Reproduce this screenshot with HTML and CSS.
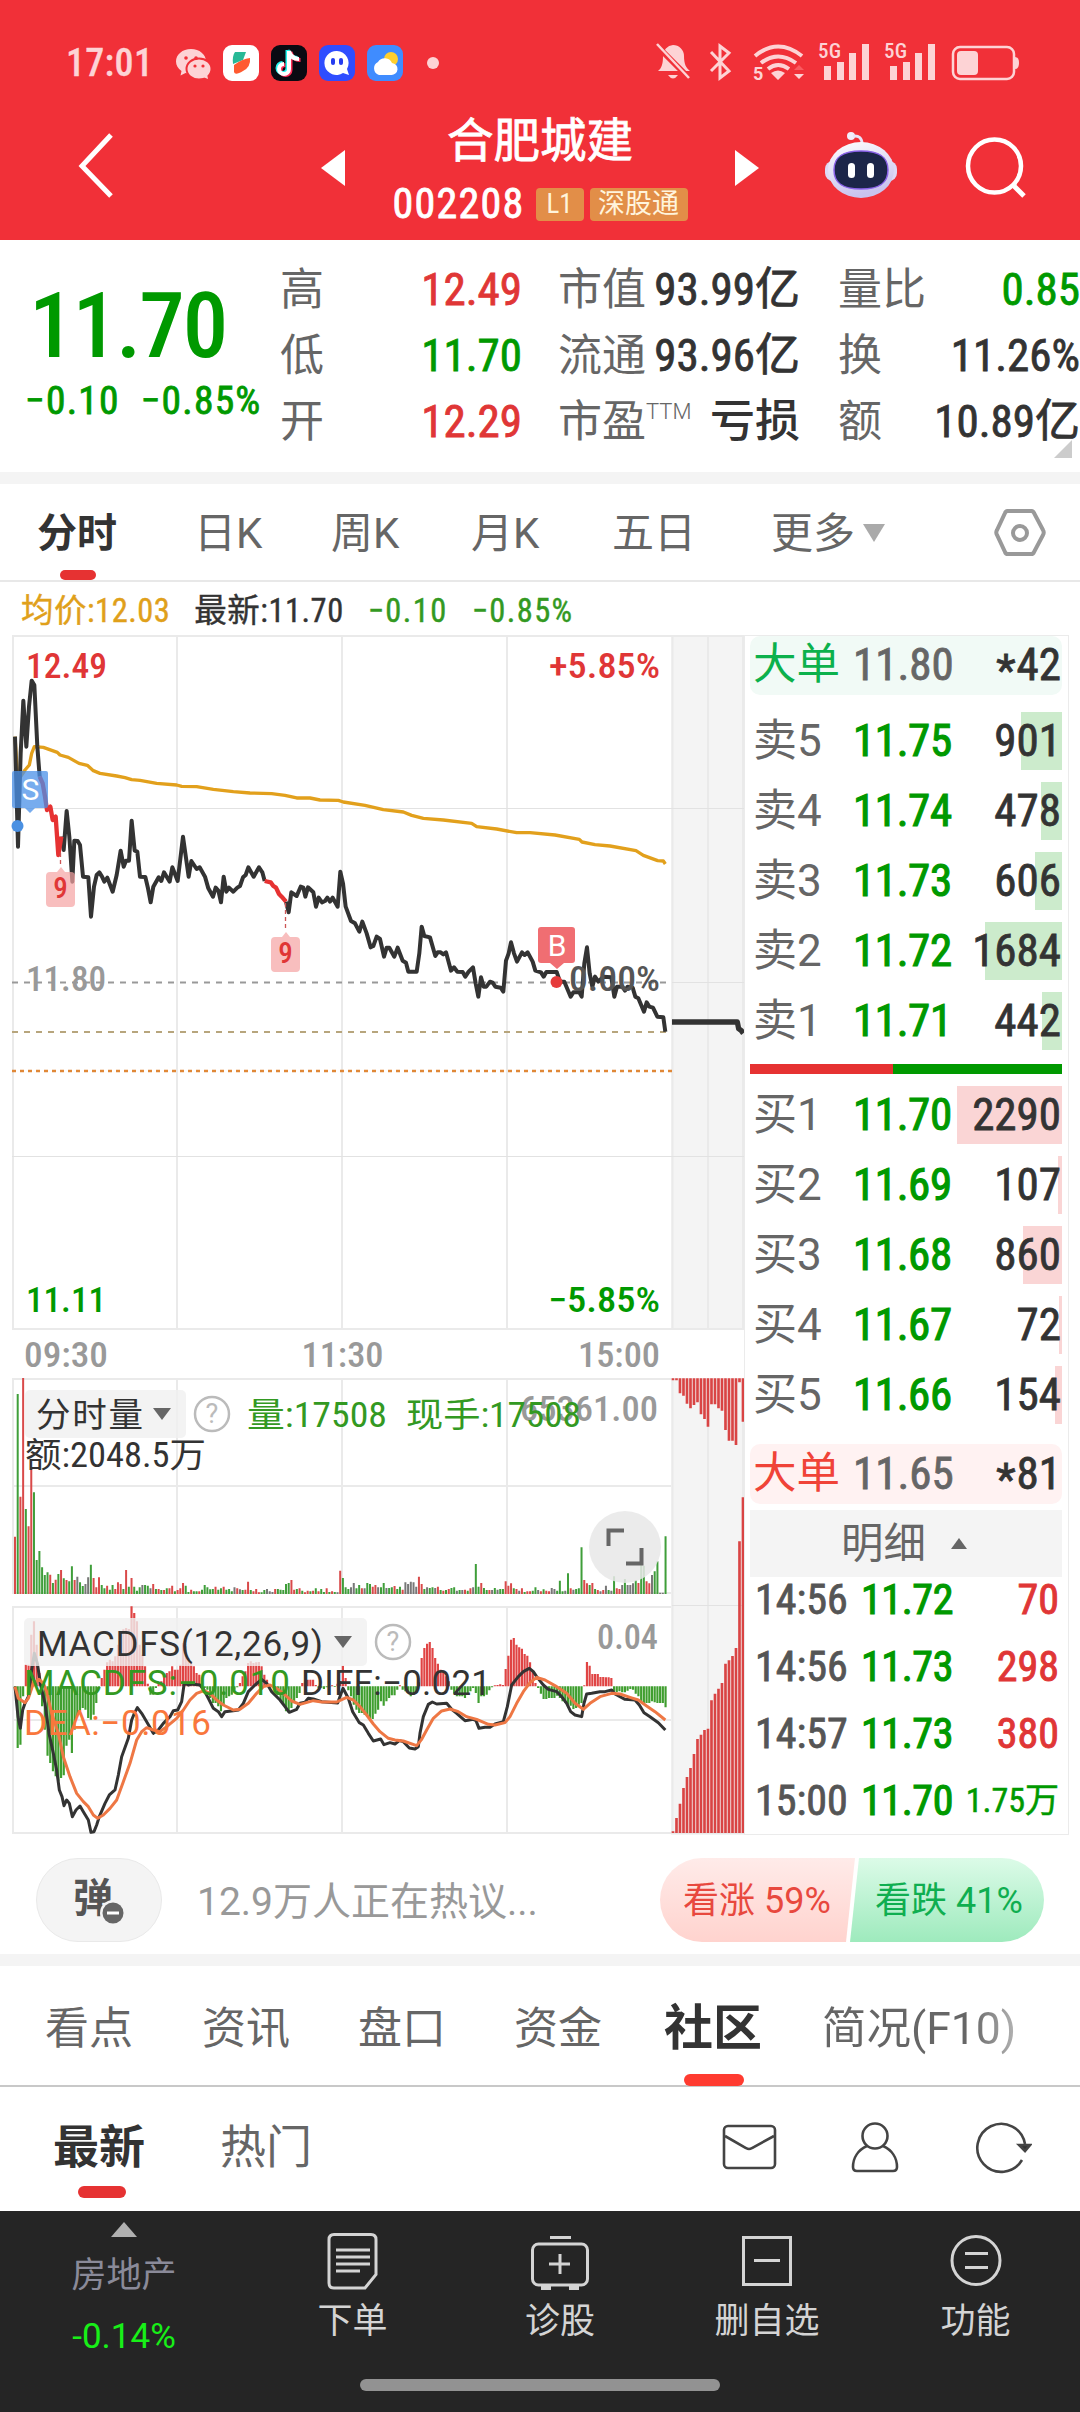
FILE: index.html
```html
<!DOCTYPE html>
<html lang="zh-CN">
<head>
<meta charset="utf-8">
<title>合肥城建 002208</title>
<link rel="stylesheet" href="styles.css">
</head>
<body>
<header class="top">
  <div class="status">
    <span class="clock">17:01</span>
    <svg class="apps" width="270" height="40" viewBox="172 42 270 40">
      <g fill="#fdd3d5"><path d="M191 48c-8.500 0-15 5.500-15 12.500 0 4 2 7 5.500 9.500l-1 4.500 5-2.500 5.500 1c8.500 0 15-5.500 15-12.500S199.500 48 191 48z"/><ellipse cx="199" cy="68" rx="12.500" ry="10.500" stroke="#f13038" stroke-width="2"/><path d="M203 76l5 2-1-5z"/></g>
      <g fill="#f13038"><circle cx="186" cy="57" r="1.800"/><circle cx="196" cy="57" r="1.800"/><circle cx="195" cy="65" r="1.600"/><circle cx="203" cy="65" r="1.600"/></g>
      <rect x="223" y="44" width="36" height="36" rx="9" fill="#fff"/><path d="M235 51h11l-3 8-10 4q-1-8 2-12z" fill="#27b996"/><path d="M234 64q8-6 16-7 1 9-7 13-8 5-9 1z" fill="#ff5a30"/>
      <rect x="271" y="44" width="36" height="36" rx="9" fill="#0a0a12"/>
      <path d="M289 50v18a5 5 0 1 1-5-5M289 50q2 8 10 8" fill="none" stroke="#fe2c55" stroke-width="4" transform="translate(1.500 1)"/><path d="M289 50v18a5 5 0 1 1-5-5M289 50q2 8 10 8" fill="none" stroke="#25f4ee" stroke-width="4" transform="translate(-1.500 -1)"/><path d="M289 50v18a5 5 0 1 1-5-5M289 50q2 8 10 8" fill="none" stroke="#fff" stroke-width="4"/>
      <rect x="319" y="44" width="36" height="36" rx="9" fill="#2f4dff"/><path d="M337 50a12 12 0 1 0 6 22l6 2-2-6a12 12 0 0 0-10-18z" fill="#fff"/><rect x="331" y="57" width="4" height="7" rx="2" fill="#243cf0"/><rect x="339" y="57" width="4" height="7" rx="2" fill="#243cf0"/>
      <rect x="367" y="44" width="36" height="36" rx="9" fill="#3f8cff"/><circle cx="391" cy="58" r="7" fill="#ffcf2e"/><path d="M379 74a7 7 0 0 1-1-13 8 8 0 0 1 14 1 6 6 0 0 1-1 12z" fill="#fff"/>
      <circle cx="433" cy="62" r="6" fill="#fdd3d5"/>
    </svg>
    <svg class="signals" width="370" height="54" viewBox="652 36 370 54">
      <g fill="#fdd3d5">
        <path d="M673 45a11 11 0 0 1 11 11c0 8 2 12 6 15h-32c4-3 5-8 5-15a11 11 0 0 1 10-11zM668 75h10q-5 7-10 0z"/>
        <path d="M656 45l33 33" stroke="#f13038" stroke-width="6"/><path d="M657 44l32 34" stroke="#fdd3d5" stroke-width="2.500"/>
        <path d="M711 52l18 19-9 7V46l9 7-18 18" fill="none" stroke="#fdd3d5" stroke-width="3"/>
        <g fill="none" stroke="#fdd3d5" stroke-width="4"><path d="M755 56q23-19 47 0M761 63q17-13 35 0M768 69q10-8 21 0"/></g>
        <path d="M771 73q7-5 14 0l-7 7zM794 74h10l-5 5z"/><path d="M794 70h10l-5-5z" fill="#fa5a60"/>
        <text x="753" y="80" class="t-wifi">5</text>
        <text x="818" y="58" class="t-5g" textLength="23">5G</text><text x="884" y="58" class="t-5g" textLength="23">5G</text>
        <path d="M824 66h7v14h-7zM837 62h7v18h-7zM849 53h7v27h-7zM862 44h7v36h-7zM890 66h7v14h-7zM903 62h7v18h-7zM915 53h7v27h-7zM928 44h7v36h-7z"/>
        <rect x="953" y="47" width="61" height="32" rx="7" fill="none" stroke="#fdd3d5" stroke-width="2.500"/><rect x="957" y="51" width="21" height="24" rx="4"/><path d="M1015 57q4 0 4 6t-4 6z"/>
      </g>
    </svg>
  </div>
  <nav class="titlebar">
    <svg class="back" width="40" height="68" viewBox="0 0 40 68"><path d="M36 3L7 34l29 30" fill="none" stroke="#fff" stroke-width="5"/></svg>
    <svg class="prev" width="24" height="36" viewBox="0 0 24 36"><path d="M24 0v36L0 18z" fill="#fff"/></svg>
    <div class="stock">
      <div class="stock-name">合肥城建</div>
      <div class="stock-code"><span>002208</span><b class="tag">L1</b><b class="tag wide">深股通</b></div>
    </div>
    <svg class="next" width="24" height="36" viewBox="0 0 24 36"><path d="M0 0v36l24-18z" fill="#fff"/></svg>
    <svg class="robot" width="74" height="68" viewBox="824 131 74 68">
      <defs><linearGradient id="shell" x1="0" y1="0" x2="0.300" y2="1"><stop offset="0" stop-color="#fff"/><stop offset="1" stop-color="#c9c3ee"/></linearGradient></defs>
      <circle cx="851" cy="136" r="4" fill="#f2eefc"/><path d="M853 136q9-1 9 8" fill="none" stroke="#e9e4f8" stroke-width="3"/>
      <rect x="825" y="161" width="72" height="20" rx="8" fill="#ded9f5"/><ellipse cx="861" cy="170" rx="33" ry="28" fill="url(#shell)"/>
      <path d="M861 151c20 0 27 7 27 19s-7 19-27 19-27-7-27-19 7-19 27-19z" fill="#1c2649" stroke="#8a62e8" stroke-width="1.500"/>
      <rect x="848" y="163" width="7" height="15" rx="3.500" fill="#fff"/><rect x="867" y="163" width="7" height="15" rx="3.500" fill="#fff"/>
    </svg>
    <svg class="search" width="62" height="62" viewBox="964 136 62 62"><circle cx="994.500" cy="166" r="26.500" fill="none" stroke="#fff" stroke-width="4.500"/><path d="M1013 185l11 11" stroke="#fff" stroke-width="5"/></svg>
  </nav>
</header>

<section class="quote">
  <div class="last">
    <div class="price">11.70</div>
    <div class="change"><span>−0.10</span><span>−0.85%</span></div>
  </div>
  <dl class="facts f1"><dt>高</dt><dd class="up">12.49</dd><dt>低</dt><dd class="down">11.70</dd><dt>开</dt><dd class="up">12.29</dd></dl>
  <dl class="facts f2"><dt>市值</dt><dd>93.99亿</dd><dt>流通</dt><dd>93.96亿</dd><dt>市盈<sup>TTM</sup></dt><dd class="loss">亏损</dd></dl>
  <dl class="facts f3"><dt>量比</dt><dd class="down">0.85</dd><dt>换</dt><dd>11.26%</dd><dt>额</dt><dd>10.89亿</dd></dl>
  <i class="corner"></i>
</section>

<nav class="periods">
  <a class="on">分时</a><a>日K</a><a>周K</a><a>月K</a><a>五日</a><a class="more">更多<i></i></a>
  <svg width="52" height="48" viewBox="994 508 52 48"><path d="M1008 510h23a3 3 0 0 1 3 2l9 17a5 5 0 0 1 0 5l-9 17a3 3 0 0 1-3 2h-23a3 3 0 0 1-3-2l-8-17a5 5 0 0 1 0-5l8-17a3 3 0 0 1 3-2z" fill="none" stroke="#999" stroke-width="4"/><circle cx="1020" cy="532" r="7" fill="none" stroke="#999" stroke-width="4"/></svg>
</nav>
<div class="legend"><span class="avg">均价:12.03</span><span>最新:11.70</span><span class="neg">−0.10</span><span class="neg">−0.85%</span></div>

<main class="board">
  <svg class="chart" width="744" height="1200" viewBox="0 635 744 1200">
    <path d="M671 636h73v694h-73zM671 1378h73v457h-73z" fill="#f4f4f4"/>
    <path d="M13 636V1329M177 636V1329M342 636V1329M507 636V1329M672.500 636V1329M708 636V1329M743 636V1329M12 636H744M12 1329H744M13 1378V1594M177 1378V1594M342 1378V1594M507 1378V1594M672.500 1378V1834M708 1378V1834M743 1378V1834M12 1379H671M12 1486H671M12 1593H671M13 1606V1834M177 1606V1834M342 1606V1834M507 1606V1834M12 1607H671M12 1720H671M12 1833H744" stroke="#eaeaea" stroke-width="2" fill="none"/>
    <path d="M12 808.500H744M12 1156.500H744M672 982.500H744M672 1605.500H744" stroke="#e2e2e2" stroke-width="1.200"/>
    <path d="M12 982.500H671" stroke="#999" stroke-width="1.800" stroke-dasharray="6 6"/>
    <path d="M12 1032H667" stroke="#b7a57c" stroke-width="1.800" stroke-dasharray="6 6"/>
    <path d="M12 1071H672" stroke="#e08838" stroke-width="2.500" stroke-dasharray="4 4"/>
    <text x="26" y="991" class="num mute" textLength="80" lengthAdjust="spacingAndGlyphs">11.80</text>
    <g transform="translate(0 620) scale(.33333)" fill="none" stroke-linejoin="round">
      <path stroke="#e2a01c" stroke-width="10" d="M45 350L52 460 62 470 75 450 88 435 95 400 103 380 130 382 172 397 180 405 205 412 237 430 262 436 280 452 300 460 350 468 375 473 395 479 420 481 470 490 530 495 545 499 590 500 640 508 700 515 750 519 815 521 855 526 890 534 930 534 960 540 1015 541 1030 546 1095 556 1150 569 1210 576 1235 586 1270 595 1330 600 1415 610 1430 620 1490 627 1550 638 1590 638 1665 645 1738 658 1746 666 1785 674 1830 678 1908 692 1930 706 1973 722 1990 723 1996 732"/>
      <path stroke="#333" stroke-width="12" d="M45 350L54 680 62 400 70 242 79 380 87 260 95 182 103 195 112 380 119 470M184 650L191 690 200 573 208 650 217 785 223 662 233 663 240 675 249 770 265 772 273 890 282 800 290 765 298 757 306 770 313 785 322 773 338 815 350 765 362 692 371 740 378 722 387 722 395 602 404 692 412 695 420 770 436 771 444 805 452 847 460 800 476 772 484 783 492 757 509 785 517 742 533 783 549 650 566 770 574 723 590 747 599 742 615 770 625 805 639 830 647 803 655 812 663 847 671 770 679 815 687 803 700 815 712 803 720 798 729 772 737 765 745 742 761 770 777 742 787 757 794 783M858 845L866 877 874 817 890 828 902 800 910 803 916 830 924 802 940 817 948 860 956 833 966 847 975 843 982 833 990 845 998 833 1013 860 1021 755 1029 790 1037 860 1053 903 1065 910 1078 935 1087 905 1100 940 1112 982 1120 978 1130 950 1140 957 1152 1010 1160 983 1168 983 1183 1010 1193 983 1208 1022 1218 1028 1225 1055 1250 1055 1258 1000 1265 920 1273 948 1290 952 1306 1008 1313 997 1322 997 1330 1003 1338 997 1353 1052 1362 1042 1372 1055 1388 1056 1396 1070 1406 1055 1419 1042 1427 1090 1435 1130 1443 1072 1451 1100 1459 1100 1470 1085 1478 1088 1486 1100 1502 1103 1510 1115 1518 1022 1526 1000 1533 967 1542 1000 1551 1025 1566 997 1574 1005 1583 997 1598 1025 1606 1052 1623 1057 1631 1070 1639 1056 1670 1056 1680 1085 1693 1085 1712 1130 1720 1117 1738 1117 1745 1130 1753 1030 1761 982 1769 1060 1777 1100 1785 1070 1795 1085 1810 1070 1834 1072 1843 1130 1851 1100 1867 1100 1875 1112 1883 1100 1898 1103 1906 1130 1915 1135 1932 1175 1940 1147 1948 1160 1959 1163 1972 1190 1990 1192 1996 1235"/>
      <path stroke="#e63232" stroke-width="13" d="M119 470L128 490 135 530 141 570 151 560 158 600 167 590 175 705 184 650M794 783L812 787 820 798 828 803 837 822 845 830 858 845"/>
      <path stroke="#333" stroke-width="16" d="M2016 1206H2212L2216 1226 2224 1232 2230 1240"/>
    </g>
    <path fill="#f5a3a3" fill-opacity=".7" d="M50 872h7l4-5 4 5h6a4 4 0 0 1 4 4v27a4 4 0 0 1-4 4H50a4 4 0 0 1-4-4v-27a4 4 0 0 1 4-4zM275 937h7l4-5 4 5h6a4 4 0 0 1 4 4v27a4 4 0 0 1-4 4h-21a4 4 0 0 1-4-4v-27a4 4 0 0 1 4-4z"/>
    <path d="M60.500 853v14M285.500 903v28" stroke="#cc5555" stroke-width="1.300" stroke-dasharray="4 3"/>
    <text x="60.500" y="898" class="num up mid sm">9</text><text x="285.500" y="963" class="num up mid sm">9</text>
    <path d="M14 771h32q2 0 2 2v33q0 2-2 2h-11l-5 5-5-5H14q-2 0-2-2v-33q0-2 2-2z" fill="#4a90e8" fill-opacity=".75"/><circle cx="17.500" cy="826" r="6" fill="#4a90e2"/>
    <text x="30.500" y="800" class="sb mid">S</text>
    <path d="M541 927h31q3 0 3 3v30q0 3-3 3h-8l-7 6-7-6h-9q-3 0-3-3v-30q0-3 3-3z" fill="#ee5a5e" fill-opacity=".88"/><circle cx="556.500" cy="982" r="6" fill="#e63b3b"/>
    <text x="557" y="956" class="sb mid">B</text>
    <text x="26" y="678" class="num up" textLength="81" lengthAdjust="spacingAndGlyphs">12.49</text><text x="660" y="678" class="num up end" textLength="111" lengthAdjust="spacingAndGlyphs">+5.85%</text>
    <text x="660" y="991" class="num end grey" textLength="91" lengthAdjust="spacingAndGlyphs">0.00%</text>
    <text x="26" y="1312" class="num down" textLength="80" lengthAdjust="spacingAndGlyphs">11.11</text><text x="660" y="1312" class="num down end" textLength="112" lengthAdjust="spacingAndGlyphs">−5.85%</text>
    <text x="24" y="1367" class="num mute" textLength="84" lengthAdjust="spacingAndGlyphs">09:30</text><text x="342.500" y="1367" class="num mute mid" textLength="82" lengthAdjust="spacingAndGlyphs">11:30</text><text x="660" y="1367" class="num mute end" textLength="82" lengthAdjust="spacingAndGlyphs">15:00</text>

    <g transform="translate(0 1370) scale(.33333)" fill="none">
      <g id="volume" stroke-width="6"></g>
      <g id="macd" stroke-width="6.500"></g>
      <g id="auction" stroke-width="8"></g>
      <g stroke-width="9" stroke-linejoin="round">
        <path stroke="#333" d="M45 950L54 1040 61 1075 68 1020 75 1000 85 980 95 900 103 850 112 880 122 945 135 1000 147 1090 160 1150 170 1200 178 1260 186 1280 192 1307 200 1290 208 1300 217 1340 228 1320 240 1308 250 1325 265 1350 273 1387 282 1385 290 1365 298 1340 315 1300 328 1275 345 1260 355 1215 365 1160 385 1105 395 1050 403 1030 412 1013 425 1030 440 1055 460 1090 475 1080 490 1060 510 1040 520 1022 533 1020 545 995 552 945 557 940 565 945 575 942 600 945 612 960 625 985 640 1015 655 1025 665 1040 675 1025 700 1022 715 1020 730 1000 745 965 765 945 785 928 800 940 815 965 840 990 855 1010 868 1027 890 1018 900 1000 915 997 925 985 940 987 965 995 1013 999 1029 955 1045 985 1058 1025 1078 1058 1090 1065 1105 1090 1120 1113 1142 1107 1152 1124 1170 1118 1185 1122 1198 1112 1210 1115 1228 1134 1245 1137 1255 1130 1260 1090 1270 1040 1285 1003 1297 996 1310 1002 1340 1000 1355 1018 1370 1030 1395 1052 1420 1048 1428 1052 1437 1075 1455 1072 1470 1072 1485 1062 1510 1055 1522 1010 1535 945 1555 920 1570 905 1588 895 1600 905 1610 920 1630 945 1645 958 1670 965 1685 980 1700 1000 1712 1025 1725 1035 1745 1040 1752 1000 1760 972 1775 970 1800 965 1815 965 1835 960 1845 972 1875 988 1905 990 1918 1005 1932 1028 1950 1040 1975 1058 1996 1080"/>
        <path stroke="#ee7744" d="M45 950L55 985 75 998 85 985 100 940 117 928 130 940 140 965 155 1030 175 1090 190 1160 210 1220 230 1270 250 1295 265 1310 280 1335 293 1345 310 1335 330 1315 350 1290 370 1235 390 1180 410 1110 425 1085 440 1073 460 1080 480 1085 500 1070 530 1045 550 1020 570 990 590 970 612 962 630 970 650 990 670 1005 700 1020 720 1018 745 1000 770 970 790 950 810 945 830 955 850 970 875 993 900 1003 940 992 965 996 1010 996 1040 982 1060 990 1080 1010 1100 1035 1120 1062 1140 1085 1165 1105 1185 1110 1210 1113 1250 1127 1265 1108 1280 1080 1300 1045 1325 1023 1350 1017 1375 1025 1400 1040 1430 1048 1465 1063 1485 1065 1515 1058 1530 1040 1550 1000 1570 965 1590 938 1610 922 1635 930 1670 950 1700 970 1725 1000 1750 1018 1770 1000 1800 980 1835 970 1860 972 1890 982 1915 990 1940 1008 1965 1025 1996 1050"/>
      </g>
    </g>

    <rect x="25" y="1390" width="161" height="48" rx="5" class="chip"/><text x="36" y="1427" class="num cn" textLength="107">分时量</text><path d="M153 1408h18l-9 12z" class="arrow"/>
    <circle cx="212" cy="1414" r="17" class="help"/><text x="212" y="1423" class="q mid">?</text>
    <text x="658" y="1421" class="num mute end" textLength="138" lengthAdjust="spacingAndGlyphs">65361.00</text>
    <text x="247" y="1427" class="num cn green" textLength="140" lengthAdjust="spacingAndGlyphs">量:17508</text><text x="406" y="1427" class="num cn green" textLength="175" lengthAdjust="spacingAndGlyphs">现手:17508</text>
    <text x="25" y="1467" class="num cn" textLength="181" lengthAdjust="spacingAndGlyphs">额:2048.5万</text>
    <circle cx="625" cy="1547" r="36" fill="#e8e8e8" fill-opacity=".86"/><path d="M608.500 1546v-15.500H624M626 1563.500h15.500V1548" fill="none" stroke="#666" stroke-width="4"/>
    <rect x="24" y="1618" width="343" height="48" rx="5" class="chip"/><text x="37" y="1656" class="rob" textLength="286">MACDFS(12,26,9)</text><path d="M334 1636h18l-9 12z" class="arrow"/>
    <circle cx="393" cy="1642" r="17" class="help"/><text x="393" y="1651" class="q mid">?</text>
    <text x="658" y="1649" class="num mute end" textLength="61" lengthAdjust="spacingAndGlyphs">0.04</text>
    <text x="24" y="1695" class="rob green" textLength="266">MACDFS:−0.010</text><text x="301" y="1695" class="rob" textLength="190">DIFF:−0.021</text>
    <text x="24" y="1735" class="rob dea" textLength="187">DEA:−0.016</text>
  </svg>

  <aside class="book">
    <div class="big sell"><span>大单</span><span>11.80</span><b><s>*</s>42</b></div>
    <div class="levels asks">
      <div><span>卖5</span><em>11.75</em><b>901</b><i style="width:41px"></i></div>
      <div><span>卖4</span><em>11.74</em><b>478</b><i style="width:21px"></i></div>
      <div><span>卖3</span><em>11.73</em><b>606</b><i style="width:27px"></i></div>
      <div><span>卖2</span><em>11.72</em><b>1684</b><i style="width:77px"></i></div>
      <div><span>卖1</span><em>11.71</em><b>442</b><i style="width:20px"></i></div>
    </div>
    <div class="ratio"></div>
    <div class="levels bids">
      <div><span>买1</span><em>11.70</em><b>2290</b><i style="width:105px"></i></div>
      <div><span>买2</span><em>11.69</em><b>107</b><i style="width:4px"></i></div>
      <div><span>买3</span><em>11.68</em><b>860</b><i style="width:39px"></i></div>
      <div><span>买4</span><em>11.67</em><b>72</b><i style="width:3px"></i></div>
      <div><span>买5</span><em>11.66</em><b>154</b><i style="width:7px"></i></div>
    </div>
    <div class="big buy"><span>大单</span><span>11.65</span><b><s>*</s>81</b></div>
    <div class="detail">明细<i></i></div>
    <div class="ticks">
      <div><span>14:56</span><em>11.72</em><b class="up">70</b></div>
      <div><span>14:56</span><em>11.73</em><b class="up">298</b></div>
      <div><span>14:57</span><em>11.73</em><b class="up">380</b></div>
      <div><span>15:00</span><em>11.70</em><b class="small">1.75万</b></div>
    </div>
  </aside>
</main>

<section class="vote">
  <button class="dan"><svg width="60" height="76" viewBox="70 1860 60 76"><text x="71" y="1910" class="dan-t">弹</text><circle cx="111" cy="1911" r="13" fill="#f4f4f4"/><circle cx="111" cy="1911" r="10.500" fill="#666"/><path d="M105 1911h12" stroke="#fff" stroke-width="3"/></svg></button>
  <span class="hot">12.9万人正在热议...</span>
  <div class="poll"><span class="bull">看涨 59%</span><span class="bear">看跌 41%</span></div>
</section>

<nav class="tabs"><a>看点</a><a>资讯</a><a>盘口</a><a>资金</a><a class="on">社区</a><a class="fade">简况(F10)</a></nav>
<section class="feed">
  <a class="on">最新</a><a>热门</a>
  <svg width="310" height="56" viewBox="722 2119 310 56" fill="none" stroke="#444" stroke-width="2.600"><rect x="724" y="2126" width="51" height="42" rx="4"/><path d="M725 2136l21 12q3 2 6 0l22-12"/><circle cx="875" cy="2136" r="12.500"/><path d="M867 2146c-9 4-14 12-14 21q0 4 4 4h36q4 0 4-4c0-9-5-17-14-21"/><path d="M1022 2160A24 24 0 1 1 1025 2144"/><path d="M1019 2145h11l-5 6z" fill="#333"/></svg>
</section>

<footer class="dock">
  <a class="sector"><i></i><span>房地产</span><em>-0.14%</em></a>
  <a><svg width="60" height="60" viewBox="0 0 60 60"><path d="M11 3.500h37q5 0 5 5v35L42 57H11q-5 0-5-5V8.500q0-5 5-5z"/><path d="M13 19h34M13 26h34M13 33h34M13 40h24"/></svg><span>下单</span></a>
  <a><svg width="60" height="60" viewBox="0 0 60 60"><rect x="2.500" y="13" width="55" height="41" rx="6"/><path d="M20 6.500h21M30 23v20M19 33h21"/><path d="M11 57h10M39 57h10" stroke-width="4"/></svg><span>诊股</span></a>
  <a><svg width="60" height="60" viewBox="0 0 60 60"><path d="M6.500 6.500h47v47h-47zM17 29.500h26"/></svg><span>删自选</span></a>
  <a><svg width="60" height="60" viewBox="0 0 60 60"><circle cx="30" cy="29.500" r="24"/><path d="M19 22.500h23M19 36.500h23"/></svg><span>功能</span></a>
  <div class="homebar"></div>
</footer>
<script src="charts.js"></script>
</body>
</html>
```
FILE: styles.css
```css
:root{--num:"Roboto Condensed",Roboto,"Noto Sans CJK SC",sans-serif;--txt:Roboto,"Noto Sans CJK SC",sans-serif;--red:#e03636;--green:#009900}
*{box-sizing:border-box}
body{margin:0;width:1080px;background:#fff;font-family:var(--num);color:#333;overflow-x:hidden;-webkit-text-stroke:.8px}
i,em{font-style:normal}
b{font-weight:inherit}
s{text-decoration:none;position:relative;top:6px;margin-right:1px}
svg{display:block}
.up{color:var(--red)}
.down{color:var(--green)}

.top{height:240px;background:#f13038;color:#fff}
.status{height:102px;padding:24px 58px 0 66px;display:flex;align-items:center}
.clock{width:106px;font-size:38px;line-height:40px;color:#fdd3d5;font-weight:500;-webkit-text-stroke:.3px;letter-spacing:.3px}
.signals{margin-left:auto}
.t-wifi{font:700 18px Roboto,sans-serif}
.t-5g{font:500 21px "Roboto Condensed",sans-serif}
.titlebar{height:138px;display:flex;align-items:flex-start}
.back{margin:30px 0 0 75px}
.prev{margin:48px 0 0 206px}
.stock{width:390px;text-align:center}
.stock-name{font-size:46.500px;line-height:60px;margin-top:9px}
.stock-code{display:flex;justify-content:center;align-items:center;gap:6px;height:34px;margin-top:16px}
.stock-code span{font-size:42px;line-height:34px;letter-spacing:1.300px;margin-right:5px}
.tag{width:48px;height:33px;background:#e28e48;color:#fff4dc;border-radius:4px;font-size:27px;line-height:33px;text-align:center;-webkit-text-stroke:0}
.tag.wide{width:98px}
.next{margin-top:48px}
.robot{margin:29px 0 0 65px}
.search{margin:34px 0 0 66px}

.quote{position:relative;height:244px;border-bottom:12px solid #f4f4f4;display:flex;align-items:flex-start;padding:17px 0 0;overflow:hidden}
.last{width:280px;color:var(--green)}
.price{font-size:91px;line-height:100px;padding:19px 0 0 29px;font-weight:500;-webkit-text-stroke:0;letter-spacing:-2px}
.change{display:flex;gap:21px;padding-left:25px;font-size:39.500px;line-height:50px;letter-spacing:1.200px;white-space:nowrap}
.facts{margin:0;display:grid;grid-template-columns:0 1fr;grid-auto-rows:66px;line-height:66px}
.facts dt{font-size:44px;color:#666;-webkit-text-stroke:0;white-space:nowrap}
.facts dd{margin:0;font-size:45px;text-align:right;white-space:nowrap}
.facts .loss{font-weight:500;-webkit-text-stroke:0}
.f1{width:242px}
.f2{width:242px;margin-left:36px}
.f3{width:242px;margin-left:38px}
sup{font:300 22px/0 Roboto,sans-serif;vertical-align:18px}
.corner{position:absolute;right:8px;top:200px;border:solid transparent;border-width:0 0 18px 18px;border-bottom-color:#ccc}

.periods{height:98px;border-bottom:2px solid #e8e8e8;padding:0 34px 0 37px;display:grid;grid-template-columns:157px 137px 140px 141px 159px 222px auto;font:42px/100px var(--txt);color:#666;-webkit-text-stroke:0}
.periods a,.tabs a,.feed a{position:relative}
.periods .on{color:#333;font-weight:700;font-size:40px}
.on::after{content:"";position:absolute;bottom:4px;left:23px;width:36px;height:10px;border-radius:5px;background:#e63232}
.more i{display:inline-block;margin:0 0 6px 8px;border:solid transparent;border-width:18px 11px 0;border-top-color:#aaa}
.periods svg{margin:25px 0 0 1px}
.legend{height:53px;padding-left:21px;display:flex;font-size:32.500px;line-height:58px;-webkit-text-stroke:.4px;letter-spacing:.5px}
.legend span{margin-right:24px}
.legend .neg{letter-spacing:1.400px}
.avg{color:#e0a01a}
.neg{color:#339922}

.board{height:1200px;display:flex;align-items:flex-start}
.num{font:500 34.500px var(--num);-webkit-text-stroke:0}
.num.cn{font-weight:400;-webkit-text-stroke:.6px}
text{fill:#333}
text.up{fill:var(--red)}
text.down{fill:var(--green)}
text.mute{fill:#999}
text.grey{fill:#555}
text.green{fill:#339922}
text.dea{fill:#f9773c}
text.t-wifi,text.t-5g{fill:#fdd3d5;-webkit-text-stroke:.3px}
.num.sm{font-size:29px}
.end{text-anchor:end}
.mid{text-anchor:middle}
text.sb{font:30px Roboto,sans-serif;fill:#fff;-webkit-text-stroke:.3px}
.rob{font:35px Roboto,sans-serif;-webkit-text-stroke:.5px}
text.q{font:27px Roboto,sans-serif;fill:#bbb;-webkit-text-stroke:.2px}
.chip{fill:#f0f0f0;fill-opacity:.8}
.arrow{fill:#666}
.help{fill:none;stroke:#bbb;stroke-width:2.500}

.book{width:325px;height:1200px;border:1px solid #ebebeb;padding:0 6px 0 5px;white-space:nowrap}
.big{height:59px;border-radius:10px;display:grid;grid-template-columns:100px 1fr auto;line-height:57px;padding:0 1px 0 3px;font-size:45px;color:#666}
.big span:first-child{font-size:43.500px;-webkit-text-stroke:0}
.big b{color:#333}
.sell{background:#f1faf6}
.sell span:first-child{color:#0cb14c}
.buy{background:#fff2f2;height:60px;margin-top:22px;line-height:59px}
.buy span:first-child{color:#f04338}
.levels>div{position:relative;height:58px;margin-bottom:12px;display:grid;grid-template-columns:100px 1fr auto;line-height:58px;font-size:45px;padding:0 1px 0 3px}
.levels span{font-family:var(--txt);font-size:44px;color:#666;-webkit-text-stroke:0}
.levels em,.ticks em{color:var(--green);-webkit-text-stroke:1.100px;letter-spacing:-.4px}
.levels b{z-index:1}
.levels i{position:absolute;right:0;top:0;height:58px;background:#ccebcc}
.bids i{background:#fad5d5}
.asks{padding-top:17px}
.ratio{height:10px;margin:14px 0 12px;background:linear-gradient(90deg,#e63232 143px,#009900 143px)}
.bids{height:336px}
.detail{height:67px;margin-top:6px;background:#f4f4f4;font-size:42.500px;line-height:71px;color:#666;display:flex;justify-content:center;align-items:center;gap:25px;padding-right:4px;-webkit-text-stroke:0}
.detail i{border:solid transparent;border-width:0 8px 11px;border-bottom-color:#666}
.ticks{margin-top:-11px}
.ticks div{height:67px;display:grid;grid-template-columns:106px 1fr auto;line-height:67px;font-size:42px;padding:0 3px 0 5px;color:#555}
.ticks b{-webkit-text-stroke:.9px}
.ticks .small{font-size:34px;color:var(--green);-webkit-text-stroke:.5px}

.vote{height:131px;border-bottom:12px solid #f4f4f4;display:flex;align-items:flex-start;padding:23px 36px 0;-webkit-text-stroke:0}
.dan{width:126px;height:84px;border:1px solid #e9e9e9;border-radius:42px;background:#f4f4f4;padding:0 0 0 35px}
text.dan-t{font:700 40px "Noto Sans CJK SC",sans-serif;fill:#555;-webkit-text-stroke:0}
.hot{margin-left:35px;font:39px/88px var(--txt);color:#999}
.poll{margin-left:auto;width:384px;height:84px;border-radius:42px;overflow:hidden;display:flex;font:36px/86px var(--txt);white-space:nowrap}
.poll span{height:84px}
.bull{width:196px;color:#e8483e;background:linear-gradient(#ffebe9,#ffd3ce);clip-path:polygon(0 0,195px 0,186px 100%,0 100%);padding-left:23px}
.bear{width:197px;margin-left:-9px;color:#0fae50;background:linear-gradient(#dcfbe8,#9eeabd);clip-path:polygon(12px 0,100% 0,100% 100%,3px 100%);padding-left:28px}

.tabs{height:121px;border-bottom:2px solid #c8c8c8;padding-left:45px;display:grid;grid-template-columns:157px 156px 156px 150px 158px auto;line-height:126px;font-size:44px;color:#666;-webkit-text-stroke:0}
.tabs .on{font-size:49px;font-weight:700;color:#333}
.tabs .on::after{left:20px;bottom:6px;width:60px;height:12px;border-radius:6px;background:#ff3b30}
.tabs .fade{font-family:var(--txt);font-size:44.500px;background:linear-gradient(90deg,#666 75%,#bbb 100%);-webkit-background-clip:text;color:transparent;width:198px;white-space:nowrap}
.feed{height:124px;display:flex;padding:0 48px 0 53px;font-size:46px;line-height:120px;color:#666;-webkit-text-stroke:0}
.feed a{width:167px}
.feed .on{font-weight:700;color:#333}
.feed .on::after{left:25px;width:48px;height:12px;border-radius:6px;bottom:13px}
.feed svg{margin:32px 0 0 auto}

.dock{position:relative;height:201px;background:#252525;display:grid;grid-template-columns:248px 209px 206px 208px 209px;-webkit-text-stroke:0}
.dock a{display:flex;flex-direction:column;align-items:center;color:#d4d4d4;font-size:35px}
.dock a svg{margin-top:20px;fill:none;stroke:#d4d4d4;stroke-width:3}
.dock a span{line-height:50px;margin-top:6px}
.dock .sector i{margin-top:11px;border:solid transparent;border-width:0 13px 15px;border-bottom-color:#b0b0b0}
.dock .sector span{margin-top:14px;color:#8a8a99}
.dock .sector em{font:35px/50px Roboto,sans-serif;margin-top:11px;color:#18ef18}
.homebar{position:absolute;left:360px;top:168px;width:360px;height:12px;border-radius:6px;background:#929292}
```
FILE: charts.js
```js
const COLORS = { r: '#d94a4a', g: '#3f9e3a', k: '#777' };
const STEP = 8.13;
const NS = 'http://www.w3.org/2000/svg';

function draw(groupId, paths) {
  const group = document.getElementById(groupId);
  for (const color in paths) {
    const p = document.createElementNS(NS, 'path');
    p.setAttribute('d', paths[color]);
    p.setAttribute('stroke', color);
    group.appendChild(p);
  }
}

const volumeAM = '172r 600g 292r 648r 255g 203r 375r 305g 102g 129g 80g 57g 65g 58r 33g 43r 60g 72r 47g 42r 38g 83g 42r 52k 35g 24g 30k 50k 88g 48r 20r 50r 27g 17g 25r 13g 27g 15r 35r 30r 15g 72r 22g 48r 22g 10g 20g 27k 27g 25g 17k 30r 15g 15r 12g 12r 17g 17r 25r 8g 12r 17r 33r 25g 6g 13r 8g 8g 8r 13g 27g 20g 14g 15g 22r 13g 17g 22r 13g 15g 8g 20k 17r 14k 12g 13r 37r 12g 8r 15r 5r 5g 12g 15k 8k 6k 15r 15g 13g 12g 30g 33g 42r 13r 15g 17r 10g 5r 10r 8g 10r 17g 8r 15g 6g 17r 6g 8r 6g 5k 70r 48g 20g 15g 20k 33k 17g 27g 17r 17k 33g 30g 22r 27r 20k'.split(' ');
const volumePM = '20g 33g 18k 18g 20g 24r 15g 22g 13r 35k 30k 37k 35k 22k 52r 30r 15g 20k 18g 20g 18k 22r 12g 10r 12g 15r 18g 20g 10k 12g 12k 13r 10g 17r 20k 90g 22g 33r 18g 12g 12r 12k 18g 13k 15g 15g 38r 25r 32r 17g 15r 10k 17r 6g 8r 8r 10g 20g 12k 8r 14g 10r 8r 18k 15k 10g 40g 8g 10k 62g 17r 13k 15g 17g 140g 42r 32r 27g 33r 15g 12r 8k 12r 25k 12g 10k 53g 17r 15r 27k 45g 27k 27k 32k 42g 33r 88g 85g 38r 32r 57k 68g 98g 4k 4k 173g'.split(' ');
const vol = { '#d94a4a': '', '#3f9e3a': '', '#777': '' };
[[volumeAM, 45], [volumePM, 1143]].forEach(([list, x0]) => list.forEach((v, i) => {
  vol[COLORS[v.slice(-1)]] += `M${(x0 + i * STEP).toFixed(1)} 672v-${parseInt(v, 10)}`;
}));
draw('volume', vol);

const macdAM = [-10,-185,-175,-30,65,65,155,195,125,40,-60,-130,-208,-230,-255,-270,-285,-275,-267,-178,-160,-200,-130,-90,-75,-65,-70,-95,-100,-85,-50,-3,25,50,72,80,75,90,125,165,171,175,172,240,220,195,125,95,60,8,-25,-25,-5,10,15,30,40,45,60,50,50,65,130,120,85,75,60,40,35,20,-5,-10,-35,-50,-50,-60,-75,-55,-35,-30,-25,-10,-3,10,30,45,70,75,70,72,73,60,35,20,5,-3,-15,-25,-40,-55,-75,-80,-65,-50,-35,-20,10,12,20,20,20,4,-4,-4,-8,-3,-3,3,-2,8,15,62,25,-12,-30,-55,-70,-80,-80,-85,-90,-95,-98,-82,-70];
const macdPM = [-45,-58,-45,-35,-27,-27,-10,3,-10,-15,-20,-30,-25,-20,12,85,115,128,133,115,85,68,50,40,30,15,-10,-22,-30,-30,-30,-35,-25,-15,-5,-20,-50,-30,-30,-25,-12,-3,3,4,6,4,52,92,140,145,125,117,113,97,92,72,45,10,-5,-22,-38,-38,-35,-35,-35,-28,-35,-45,-50,-55,-58,-68,-65,-55,-50,3,73,62,37,37,37,28,28,27,27,25,-15,-17,-15,-18,-18,-13,-8,-10,-22,-30,-45,-55,-50,-50,-45,-48,-50,-50,-50,-63];
const hist = { '#e04444': '', '#3f9e2f': '' };
[[macdAM, 45], [macdPM, 1143]].forEach(([list, x0]) => list.forEach((v, i) => {
  hist[v > 0 ? '#e04444' : '#3f9e2f'] += `M${(x0 + i * STEP).toFixed(1)} 949v${-v}`;
}));
draw('macd', hist);

const unmatched = [6,6,45,52,76,90,80,72,108,122,145,78,78,90,97,155,187,187,200,12,130];
const matched = [5,45,88,135,168,195,237,282,295,309,313,398,418,433,450,508,518,531,555,875,1007];
let auction = '';
unmatched.forEach((h, i) => {
  const x = (2019 + i * 10.5).toFixed(1);
  auction += `M${x} 25v${h}M${x} 1389v-${matched[i]}`;
});
draw('auction', { '#d94444': auction });
```
